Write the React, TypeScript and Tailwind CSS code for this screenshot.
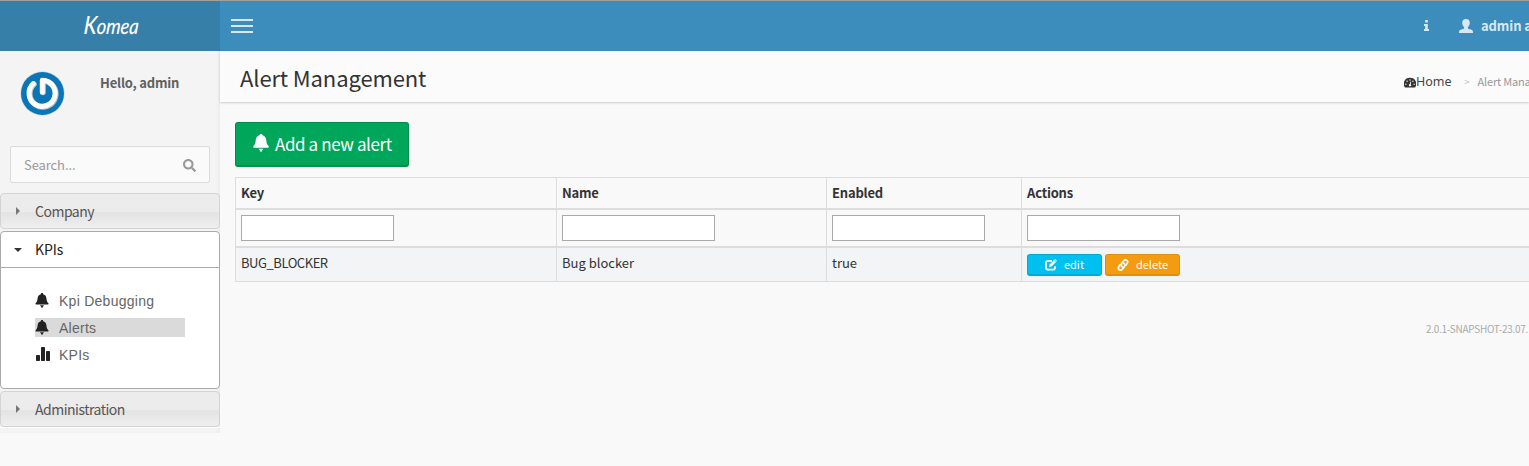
import type { ReactNode } from "react";
import { FaSearch } from "react-icons/fa";

const BellIcon = ({ className }: { className: string }) => (
  <svg viewBox="0 0 14 16" className={`shrink-0 ${className}`} fill="currentColor">
    <path d="M7 0c.9 0 1.300.5 1.300 1.200C10.700 1.900 11.500 3.600 11.700 5.500c.2 2.500.7 4 2.100 5.400.3.300.2 1.300-.3 1.300H.5c-.5 0-.6-1-.3-1.300C1.600 9.500 2.100 8 2.300 5.500 2.500 3.600 3.300 1.900 5.700 1.200 5.700.5 6.100 0 7 0z" />
    <path d="M5 13h4c-.2 1-.6 1.200-1 1.300V15.500H6V14.300c-.4-.1-.8-.3-1-1.300z" />
  </svg>
);

const StatsIcon = () => (
  <svg viewBox="0 0 14 14" className="mb-px ml-px h-3.5 w-3.5" fill="currentColor">
    <rect x="0" y="8" width="4" height="6" rx=".8" />
    <rect x="5" y="0" width="4" height="14" rx=".8" />
    <rect x="10" y="4" width="4" height="10" rx=".8" />
  </svg>
);

const InfoIcon = () => (
  <svg viewBox="0 0 5 11" className="mb-px h-[11px] w-[5px] shrink-0" fill="currentColor">
    <path d="M1.200 0h2.600v2.600H1.200zM0 4h3.800v5H5v2H0V9h1.200V6H0z" />
  </svg>
);

const UserIcon = () => (
  <svg viewBox="0 0 14 14" className="mb-px h-3.5 w-3.5 shrink-0" fill="currentColor">
    <path d="M7 0c2.500 0 3.800 1.500 3.800 3.800 0 1.900-.8 3.500-1.900 4.400-.2.300-.2 1 .1 1.300.9.600 2.500.8 4 1.600.8.500 1 1.400 1 2.900H0c0-1.500.2-2.400 1-2.900 1.500-.8 3.100-1 4-1.600.3-.3.300-1 .1-1.300C4 7.300 3.200 5.700 3.200 3.800 3.200 1.500 4.500 0 7 0z" />
  </svg>
);

const DashboardIcon = () => (
  <svg viewBox="0 0 14 12" className="h-[11px] w-3 shrink-0" fill="#333">
    <path d="M7 .5a7 7 0 0 1 5.900 11.200H1.100A7 7 0 0 1 7 .5z" />
    <g fill="#fbfbfb">
      <circle cx="2.200" cy="8" r=".8" />
      <circle cx="3.600" cy="4.600" r=".8" />
      <circle cx="7" cy="3.100" r=".8" />
      <circle cx="10.400" cy="4.600" r=".8" />
      <circle cx="11.800" cy="8" r=".8" />
      <path d="M7.600 4.700l.9.300-.7 2.900a1.400 1.400 0 1 1-1-.2z" />
    </g>
  </svg>
);

const EditIcon = () => (
  <svg viewBox="0 0 12 12" className="h-3 w-3" fill="none" stroke="currentColor">
    <path d="M7 1.800H3.200A2.200 2.200 0 0 0 1 4v4.500a2.200 2.200 0 0 0 2.200 2.200h4.600A2.200 2.200 0 0 0 10 8.500V7.200" strokeWidth="1.800" />
    <path d="M4 8l.6-2.500L9 1.100 11 3 6.500 7.400z" fill="currentColor" stroke="none" />
    <path d="M9.500.6l.6-.6L12 1.900l-.6.600z" fill="currentColor" stroke="none" />
  </svg>
);

const LinkIcon = () => (
  <svg viewBox="0 0 12 12" className="h-3 w-3" fill="none" stroke="currentColor" strokeWidth="1.700" strokeLinecap="round">
    <path d="M5.200 7.700C3.800 6.700 4 5.100 5 3.900l1.900-2.200c2-2 4.800.3 3.300 2.600L8.800 6.200" />
    <path d="M6.800 4.300C8.200 5.300 8 6.900 7 8.100l-1.900 2.200c-2 2-4.800-.3-3.300-2.600l1.400-1.900" />
  </svg>
);

const Avatar = () => (
  <svg viewBox="0 0 45 45" className="h-[45px] w-[45px]" fill="none">
    <circle cx="22.500" cy="22.500" r="22.200" fill="#d5dce0" />
    <circle cx="22.500" cy="22.500" r="21.500" fill="#0a76b8" />
    <path d="M14 13.300A13 13 0 1 0 23 9.900V21.500" stroke="#bcc6cc" strokeWidth="5.600" strokeLinecap="round" strokeLinejoin="round" />
    <path d="M13.300 12.700A13 13 0 1 0 22.300 9.300V21" stroke="#fff" strokeWidth="5" strokeLinecap="round" strokeLinejoin="round" />
  </svg>
);

const AccordionHeader = ({ label }: { label: string }) => (
  <div className="flex h-9 items-center rounded border border-[#d3d3d3] bg-[linear-gradient(#ececec_0%,#ebebeb_52%,#e3e3e3_55%,#efefef_100%)] pl-[15px] text-[#555]">
    <svg viewBox="0 0 4 8" className="h-2 w-1" fill="#777"><path d="M0 0l4 4-4 4z" /></svg>
    <span className="ml-[15px] text-[14px] leading-5 tracking-[-0.5px]">{label}</span>
  </div>
);

const MenuItem = ({ icon, label, active }: { icon: ReactNode; label: string; active?: boolean }) => (
  <li className={`flex h-[19px] w-[150px] items-center ${active ? "bg-[#dadada]" : ""}`}>
    <span className="flex w-6 text-[#222]">{icon}</span>
    <span className="pt-0.5 font-['Liberation_Sans',sans-serif] text-[14px] leading-[19px] tracking-[0.26px] text-[#666]">{label}</span>
  </li>
);

const columns = [
  { title: "Key", value: "BUG_BLOCKER", spacing: "tracking-[-0.45px]" },
  { title: "Name", value: "Bug blocker", spacing: "" },
  { title: "Enabled", value: "true", spacing: "" },
  { title: "Actions", value: "", spacing: "" },
];

const Sidebar = () => (
  <aside className="h-[382px] w-[220px] shrink-0 bg-[#f4f4f4] shadow-[inset_-3px_0_4px_-2px_rgba(0,0,0,0.05)]">
    <div className="flex h-[95px] pt-5 pl-5">
      <Avatar />
      <span className="ml-[35px] pt-[2px] text-[13px] leading-5 font-bold tracking-[-0.2px] text-[#606060]">Hello, admin</span>
    </div>
    <form className="mx-2.5 flex h-[37px] items-center justify-between rounded-xs border border-[#dbdbdb] bg-[#fafafa] pr-[13px] pl-[13px]">
      <span className="pt-px text-[13px] leading-5 tracking-[-0.1px] text-[#999]">Search...</span>
      <FaSearch className="mt-px h-[13px] w-[13px] text-[#999]" />
    </form>
    <nav className="mt-2.5 flex flex-col gap-0.5">
      <AccordionHeader label="Company" />
      <div className="h-[158px] rounded border border-[#aaa] bg-white">
        <div className="flex h-9 items-center border-b border-[#aaa] pl-[13px] text-[#212121]">
          <svg viewBox="0 0 8 4" className="h-1 w-2" fill="#333"><path d="M0 0h8L4 4z" /></svg>
          <span className="mb-0.5 ml-[13px] text-[14px] leading-5 tracking-[-0.1px]">KPIs</span>
        </div>
        <ul className="flex flex-col gap-2 pt-[23px] pl-[34px]">
          <MenuItem icon={<BellIcon className="mb-px h-[15px] w-[14px]" />} label="Kpi Debugging" />
          <MenuItem icon={<BellIcon className="mb-px h-[15px] w-[14px]" />} label="Alerts" active />
          <MenuItem icon={<StatsIcon />} label="KPIs" />
        </ul>
      </div>
      <AccordionHeader label="Administration" />
    </nav>
    <div className="h-px bg-white" />
  </aside>
);

const AlertTable = () => (
  <div className="mt-2.5 grid w-[1400px] grid-cols-[321px_270px_195px_614px] border-t border-l border-[#ddd] text-[13px] leading-5 text-[#333]">
    {columns.map((c) => (
      <div key={c.title} className="h-8 border-r border-b-2 border-[#ddd] pt-[5px] pl-[5px] font-bold tracking-[-0.2px]">{c.title}</div>
    ))}
    {columns.map((c) => (
      <div key={c.title} className="h-[38px] border-r border-b-2 border-[#ddd] pt-[5px] pl-[5px]">
        <input aria-label={c.title} className="block h-[26px] w-[153px] border border-[#a9a9a9] bg-white" />
      </div>
    ))}
    {columns.map((c) => (
      <div key={c.title} className={`h-[34px] border-r border-b border-[#ddd] bg-[#f3f4f5] pt-[5px] pl-[5px] ${c.spacing}`}>
        {c.value || (
          <div className="flex gap-[3px] pt-px text-[11px] text-white">
            <button className="flex h-[22px] w-[75px] items-center justify-center gap-[7px] rounded-[3px] border border-b-2 border-[#00acd6] bg-[#00c0ef]"><EditIcon /><span className="mb-px">edit</span></button>
            <button className="flex h-[22px] w-[75px] items-center justify-center gap-[7px] rounded-[3px] border border-b-2 border-[#e08e0b] bg-[#f39c12]"><LinkIcon /><span className="mb-px">delete</span></button>
          </div>
        )}
      </div>
    ))}
  </div>
);

export default function App() {
  return (
    <div className="h-[466px] w-full overflow-hidden bg-[#f9f9f9] font-['Noto_Sans_CJK_SC',sans-serif] whitespace-nowrap">
      <header className="flex h-[51px] border-t border-[#a0a0a0] bg-[#3c8dbc]">
        <div className="flex w-[220px] shrink-0 justify-center bg-[#367fa9] pt-[7px] pl-0.5 text-white">
          <span className="scale-x-[0.83] -skew-x-6 font-['Lato',sans-serif] text-[22px] leading-8 font-medium italic first-letter:text-[25px]">Komea</span>
        </div>
        <div className="flex flex-1 justify-between pl-[11px]">
          <div className="flex flex-col gap-1 pt-[18px]">
            <span className="h-0.5 w-[22px] bg-[#d8e8f2]" />
            <span className="h-0.5 w-[22px] bg-[#d8e8f2]" />
            <span className="h-0.5 w-[22px] bg-[#d8e8f2]" />
          </div>
          <div className="flex w-[105px] items-center text-[#d8e8f2]">
            <InfoIcon />
            <span className="ml-[30px] shrink-0"><UserIcon /></span>
            <span className="ml-2 text-[13px] leading-5 font-bold tracking-[-0.1px]">admin a</span>
          </div>
        </div>
      </header>
      <div className="flex">
        <Sidebar />
        <main className="min-w-0 flex-1">
          <div className="flex h-[51px] justify-between bg-[#fbfbfb] pl-5 shadow-[0_1px_2px_rgba(0,0,0,0.18)]">
            <h1 className="pt-[10px] text-[22px] leading-8 tracking-[-0.12px] text-[#333]">Alert Management</h1>
            <div className="flex w-[125px] items-center pt-[11px]">
              <DashboardIcon />
              <span className="font-['Noto_Sans',sans-serif] text-[12.500px] leading-5 text-[#444]">Home</span>
              <span className="ml-[13px] text-[9px] text-[#bbb]">&gt;</span>
              <span className="mb-0.5 ml-2 text-[11px] leading-5 tracking-[-0.2px] text-[#999]">Alert Mana</span>
            </div>
          </div>
          <div className="pt-5 pl-[15px]">
            <button className="flex h-[45px] w-[174px] items-center rounded-[3px] border border-b-2 border-[#008d4c] bg-[#00a65a] pl-[17px] text-white">
              <BellIcon className="mb-0.5 h-[18px] w-[16px]" />
              <span className="ml-[6px] text-[17px] leading-6 tracking-[-0.4px]">Add a new alert</span>
            </button>
            <AlertTable />
            <div className="flex justify-end pt-[37px]">
              <span className="w-[103px] text-[10px] leading-5 tracking-[-0.27px] text-[#aaa]">2.0.1-SNAPSHOT-23.07.</span>
            </div>
          </div>
        </main>
      </div>
    </div>
  );
}
